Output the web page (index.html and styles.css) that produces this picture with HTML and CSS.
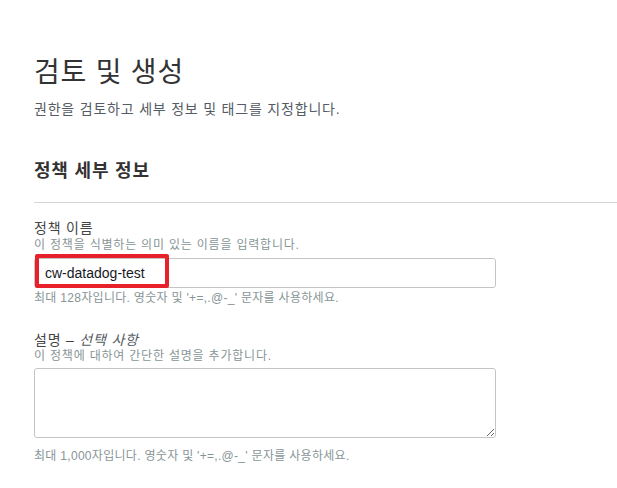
FILE: index.html
```html
<!DOCTYPE html>
<html lang="ko">
<head>
    <meta charset="UTF-8">
    <meta name="viewport" content="width=device-width, initial-scale=1.0">
    <title>검토 및 생성</title>
    <link rel="stylesheet" href="styles.css">
</head>
<body>
    <main class="page">
        <header class="page-header">
            <h1>검토 및 생성</h1>
            <p class="page-desc">권한을 검토하고 세부 정보 및 태그를 지정합니다.</p>
        </header>

        <section class="details">
            <h2>정책 세부 정보</h2>

            <div class="field">
                <label for="policy-name">정책 이름</label>
                <div class="hint">이 정책을 식별하는 의미 있는 이름을 입력합니다.</div>
                <div class="input-wrap">
                    <input type="text" id="policy-name" value="cw-datadog-test">
                    <span class="highlight"></span>
                </div>
                <div class="constraint">최대 128자입니다. 영숫자 및 '+=,.@-_' 문자를 사용하세요.</div>
            </div>

            <div class="field field-desc">
                <label for="policy-desc">설명 – <i>선택 사항</i></label>
                <div class="hint">이 정책에 대하여 간단한 설명을 추가합니다.</div>
                <textarea id="policy-desc"></textarea>
                <div class="constraint constraint-desc">최대 1,000자입니다. 영숫자 및 '+=,.@-_' 문자를 사용하세요.</div>
            </div>
        </section>
    </main>
</body>
</html>
```

FILE: styles.css
```css
body {
    margin: 0;
    background-color: #ffffff;
    font-family: 'Liberation Sans', Arial, 'Noto Sans CJK KR', sans-serif;
    letter-spacing: 0.05em;
    color: #16191f;
}

.page {
    padding: 56px 0 0 34px;
}

h1 {
    margin: 0;
    font-size: 28px;
    line-height: 34px;
    font-weight: normal;
    color: #333333;
}

.page-desc {
    margin: 9px 0 0;
    font-size: 14px;
    line-height: 20px;
    color: #545b64;
}

.details h2 {
    margin: 40px 0 0;
    padding-bottom: 19px;
    border-bottom: 1px solid #d5d5d5;
    font-size: 18px;
    line-height: 24px;
    font-weight: bold;
    color: #333333;
}

.field {
    width: 462px;
}

label {
    display: block;
    margin-top: 17px;
    font-size: 14px;
    line-height: 16px;
    color: #444444;
}

label i {
    color: #545b64;
}

.field-desc label {
    margin-top: 27px;
}

.hint,
.constraint {
    font-size: 12px;
    line-height: 14px;
    color: #879596;
}

.hint {
    margin-top: 2px;
}

.field-desc .hint {
    margin-top: 1px;
}

.input-wrap {
    position: relative;
    margin-top: 6px;
}

input,
textarea {
    display: block;
    width: 100%;
    box-sizing: border-box;
    border: 1px solid #c4c4c4;
    border-radius: 3px;
    font-family: inherit;
    font-size: 14px;
    letter-spacing: normal;
    color: #16191f;
    background-color: #ffffff;
}

input {
    height: 30px;
    padding: 0 10px;
}

textarea {
    height: 70px;
    margin-top: 5px;
    padding: 4px 10px;
}

.highlight {
    position: absolute;
    left: 1px;
    top: -4px;
    width: 134px;
    height: 34px;
    box-sizing: border-box;
    border: 4px solid #e8202a;
    border-radius: 2px;
}

.constraint {
    margin-top: 3px;
    letter-spacing: 0.025em;
}

.constraint-desc {
    margin-top: 11px;
}
```
